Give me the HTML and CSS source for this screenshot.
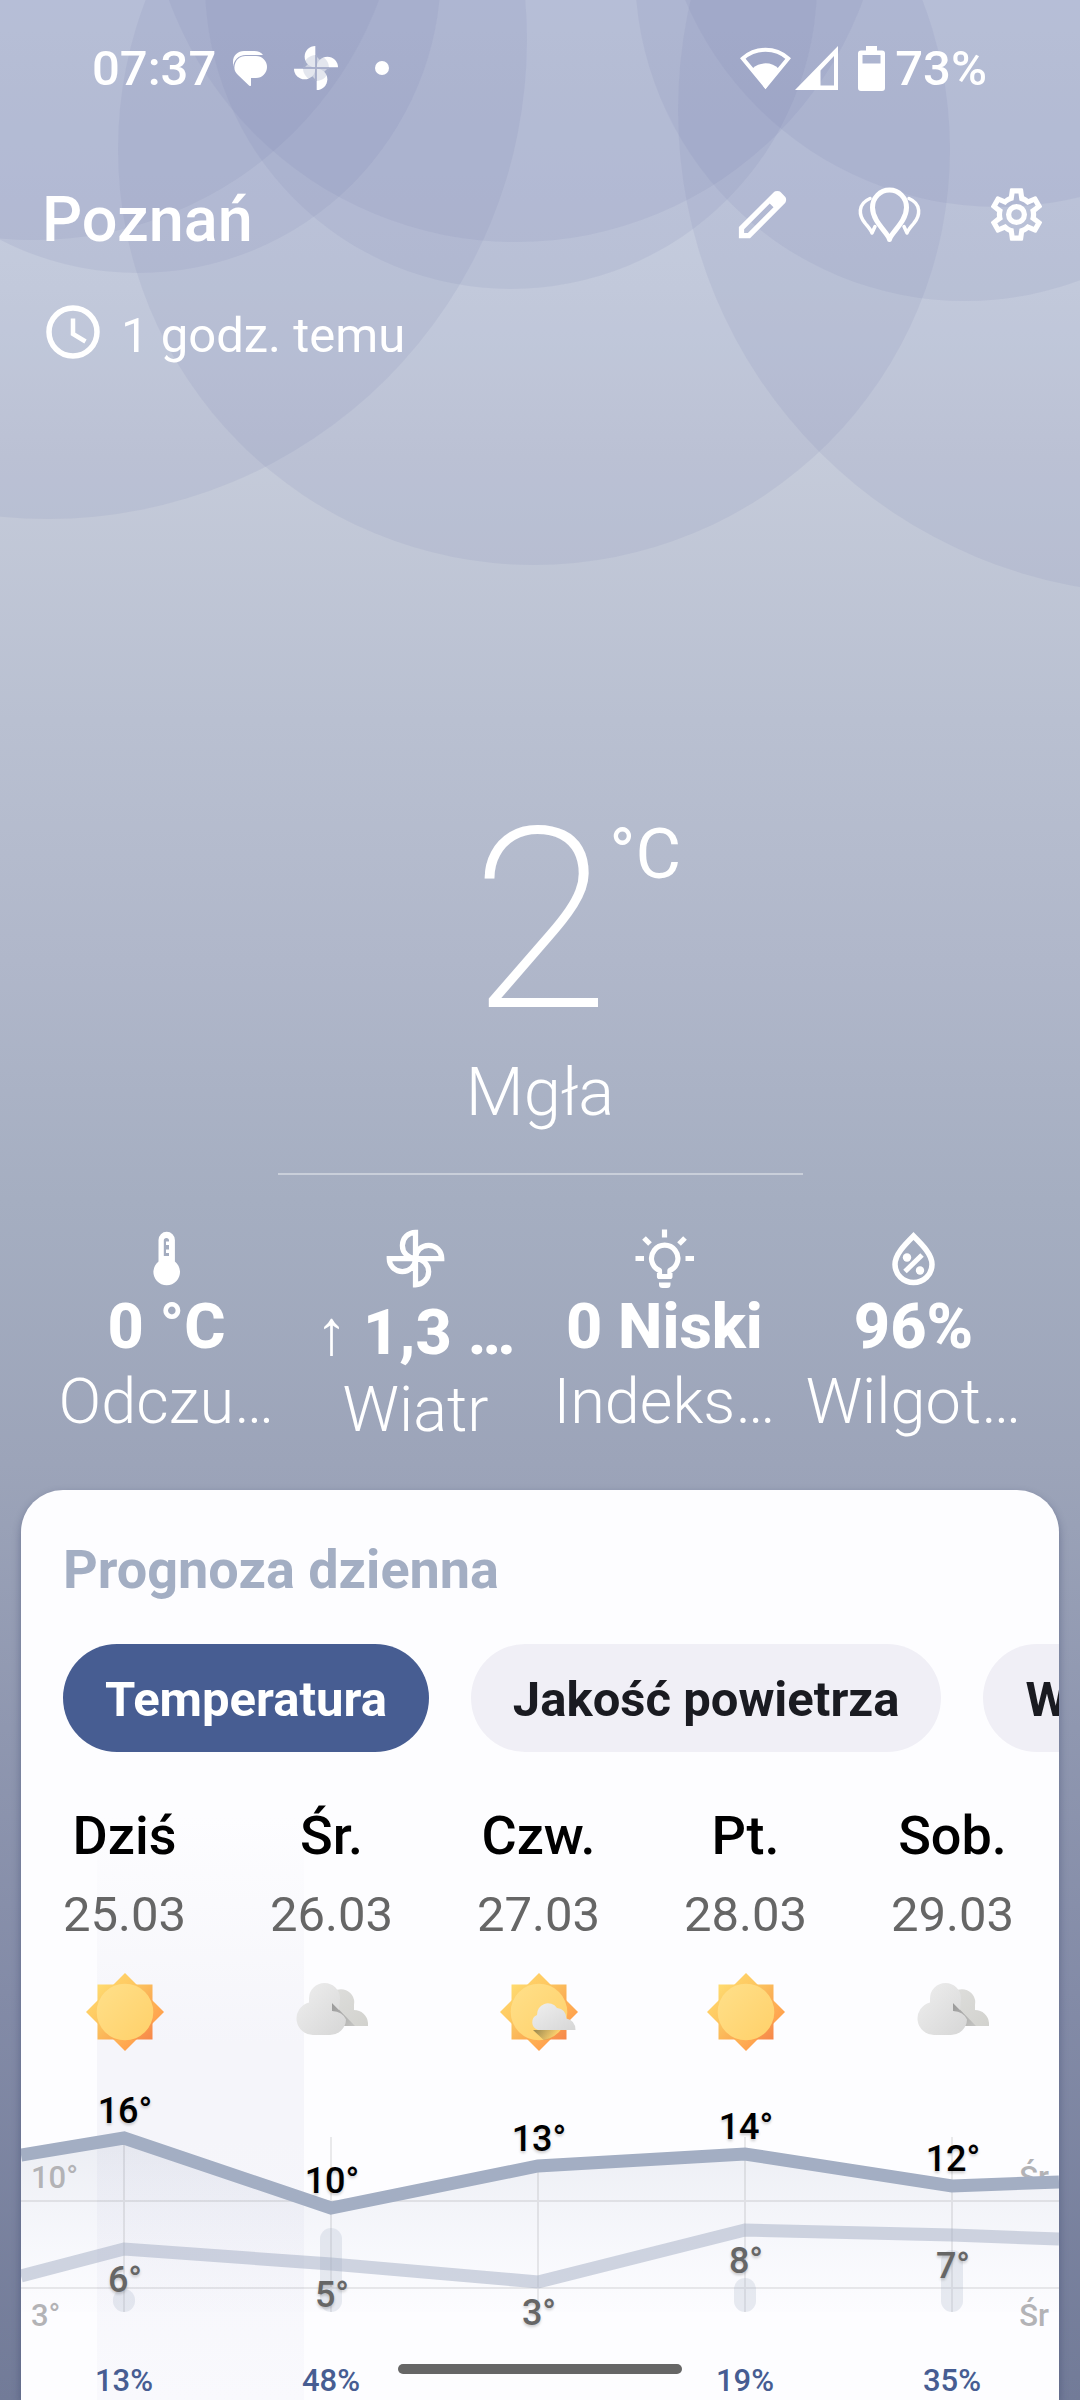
FILE: index.html
```html
<!DOCTYPE html>
<html lang="pl">
<head>
<meta charset="utf-8">
<meta name="viewport" content="width=device-width, initial-scale=1">
<title>Pogoda – Poznań</title>
<link rel="stylesheet" href="styles.css">
</head>
<body>
<div class="app">
  <svg class="sky" viewBox="0 0 1080 600" preserveAspectRatio="xMidYMin slice" aria-hidden="true">
    <circle cx="48" cy="40" r="479"/><circle cx="138" cy="-30" r="303"/><circle cx="34" cy="-128" r="368"/>
    <circle cx="534" cy="149" r="416"/><circle cx="511" cy="-17" r="306"/><circle cx="516" cy="-128" r="370"/>
    <circle cx="1162" cy="110" r="484"/><circle cx="965" cy="-29" r="330"/><circle cx="998" cy="-133" r="340"/>
  </svg>

  <div class="status">
    <div class="status-left">
      <time>07:37</time>
      <svg class="i-msg" viewBox="0 0 36 36" aria-hidden="true">
        <path d="M1 17V12C1 5 6 1 12 1h9c5 0 8 1 10 4H14C6 5 2 10 1 17Z"/>
        <path d="M14 6h10a11 11 0 0 1 0 22h-5v7q0 2-2 .5L6 25A11 11 0 0 1 14 6Z"/>
      </svg>
      <svg class="i-pin" viewBox="0 0 44 44" aria-hidden="true">
        <g opacity=".65"><path d="M21 11v10h-10Z M33 21H23V11Z M23 33V23h10Z M11 23h10v10Z"/></g>
        <path d="M21.3 0v21.3a10.6 10.6 0 0 1 0-21.3Z"/>
        <path transform="rotate(90 22 22)" d="M21.3 0v21.3a10.6 10.6 0 0 1 0-21.3Z"/>
        <path transform="rotate(180 22 22)" d="M21.3 0v21.3a10.6 10.6 0 0 1 0-21.3Z"/>
        <path transform="rotate(270 22 22)" d="M21.3 0v21.3a10.6 10.6 0 0 1 0-21.3Z"/>
        <circle cx="22" cy="22" r="13" fill="#a9b0cb" opacity=".32"/>
        <path d="M22 9v26M9 22h26" stroke="#a9b0cb" stroke-width="1.4"/>
      </svg>
      <span class="dot"></span>
    </div>
    <div class="status-right">
      <svg class="i-wifi" viewBox="0 0 51 44" aria-hidden="true">
        <path d="M2.8 12.5a34 34 0 0 1 45.4 0L25.500 40Z" fill="none" stroke="#fff" stroke-width="4"/>
        <path d="M12 23a19 19 0 0 1 27 0L25.500 43Z"/>
      </svg>
      <svg class="i-signal" viewBox="0 0 43 44" aria-hidden="true">
        <path fill-rule="evenodd" d="M0 44 43 0v44ZM25.500 39.500h13.500V10L25.500 24.500Z"/>
      </svg>
      <svg class="i-bat" viewBox="0 0 27 45" aria-hidden="true">
        <path fill-rule="evenodd" d="M8 0h11v4.500h5a3 3 0 0 1 3 3V42a3 3 0 0 1-3 3H3a3 3 0 0 1-3-3V7.500a3 3 0 0 1 3-3h5ZM4.500 9v8.500h18V9Z"/>
      </svg>
      <span>73%</span>
    </div>
  </div>

  <header class="top">
    <h1>Poznań</h1>
    <button type="button" class="tool" aria-label="Edytuj">
      <svg viewBox="0 0 24 24"><path d="M5 19h1.425L16.200 9.225 14.775 7.800 5 17.575Zm-2 2v-4.250L16.200 3.575q.3-.275.663-.425T17.625 3t.775.150.650.450L20.425 5q.3.275.438.650T21 6.400q0 .4-.138.763t-.437.662L7.250 21Z"/></svg>
    </button>
    <button type="button" class="tool" aria-label="Lokalizacje">
      <svg viewBox="0 0 63 63" fill="none" stroke="#fff" stroke-linecap="round" stroke-linejoin="round">
        <path stroke-width="5" d="M31.500 56.500C30.500 50 14.500 39 14.500 24.500a17 17.500 0 0 1 34 0C48.500 39 32.500 50 31.500 56.500Z"/>
        <path stroke-width="3.500" d="M12 15.500C-1 21 1 33 7 40c4 5 6 7 7 10l3-6.500M51 15.500C64 21 62 33 56 40c-4 5-6 7-7 10l-3-6.500"/>
      </svg>
    </button>
    <button type="button" class="tool" aria-label="Ustawienia">
      <svg viewBox="0 0 24 24"><path d="M12 8a4 4 0 0 1 4 4 4 4 0 0 1-4 4 4 4 0 0 1-4-4 4 4 0 0 1 4-4m0 2a2 2 0 0 0-2 2 2 2 0 0 0 2 2 2 2 0 0 0 2-2 2 2 0 0 0-2-2m-2 12c-.250 0-.460-.180-.500-.420l-.370-2.650c-.630-.250-1.170-.590-1.690-.990l-2.490 1.010c-.220.080-.490 0-.610-.220l-2-3.460c-.130-.220-.070-.490.120-.640l2.110-1.660L4.500 12l.070-1-2.110-1.630c-.190-.150-.250-.420-.120-.640l2-3.460c.120-.220.390-.310.610-.220l2.490 1c.520-.390 1.060-.730 1.690-.980l.370-2.650c.040-.240.250-.420.500-.420h4c.250 0 .460.180.500.420l.370 2.650c.630.250 1.170.590 1.690.980l2.490-1c.220-.090.490 0 .610.220l2 3.460c.130.220.070.490-.120.640L19.430 11l.070 1-.070 1 2.110 1.630c.190.150.250.420.120.640l-2 3.460c-.120.220-.390.310-.610.220l-2.490-1c-.520.390-1.060.730-1.690.980l-.370 2.650c-.040.240-.250.420-.500.420zm1.250-18-.370 2.610c-1.200.250-2.260.890-3.030 1.780L5.440 7.350l-.750 1.300L6.800 10.200a5.550 5.550 0 0 0 0 3.600l-2.120 1.560.750 1.300 2.430-1.040c.770.880 1.820 1.520 3.010 1.760l.370 2.620h1.520l.370-2.610c1.190-.250 2.240-.890 3.010-1.770l2.430 1.040.750-1.300-2.120-1.550c.400-1.170.400-2.440 0-3.610l2.110-1.550-.750-1.300-2.410 1.040a5.420 5.420 0 0 0-3.030-1.770L12.750 4z"/></svg>
    </button>
  </header>

  <p class="updated">
    <svg viewBox="0 0 54 54" fill="none" stroke="#fff" aria-hidden="true"><circle cx="27" cy="27" r="24" stroke-width="5.500"/><path stroke-width="4.500" d="M27 13.500V29l12.500 7.500"/></svg>
    <span>1 godz. temu</span>
  </p>

  <main>
    <section class="now">
      <div class="temp"><span class="deg">2</span><span class="unit">°C</span></div>
      <p class="cond">Mgła</p>
      <hr>
      <ul class="stats">
        <li>
          <svg viewBox="0 0 63 63" aria-hidden="true"><path fill-rule="evenodd" d="M23.500 13a8.200 8.200 0 0 1 16.400 0v21.500a13.300 13.300 0 1 1-16.400 0ZM28.800 13.500V29H34v-3h-3v-3.500h3V18h-3v-3.500h3v-1a2.600 2.600 0 0 0-5.200 0Z"/></svg>
          <strong>0 °C</strong><span>Odczu…</span>
        </li>
        <li>
          <svg viewBox="0 0 24 24" fill="none" stroke="#fff" stroke-width="2" aria-hidden="true"><path d="M12 13V2a5 5 0 0 0 0 10M11 12h11a5 5 0 0 0-10 0M12 11v11a5 5 0 0 0 0-10M13 12H2a5 5 0 0 0 10 0"/></svg>
          <strong class="with-arrow">↑ 1,3 …</strong><span>Wiatr</span>
        </li>
        <li>
          <svg viewBox="0 0 63 63" aria-hidden="true"><g fill="none" stroke="#fff" stroke-width="5.200"><path d="M26.500 49.500V43.500a13.200 13.200 0 1 1 10.400 0V49.500Z" stroke-linejoin="round"/><path d="M31.500 2.500v8M2.500 31.500h8.500M52.500 31.500H61M11 11l6 6M52 11l-6 6"/></g><path d="M26 55.500h11.500v2a3.500 3.500 0 0 1-3.500 3.500h-4.500a3.500 3.500 0 0 1-3.500-3.500Z"/></svg>
          <strong>0 Niski</strong><span>Indeks…</span>
        </li>
        <li>
          <svg viewBox="0 0 63 63" aria-hidden="true"><path fill="none" stroke="#fff" stroke-width="5.500" d="M31.500 9C22 18.500 13 27.500 13 37.500a18.500 18 0 0 0 37 0C50 27.500 41 18.500 31.500 9Z"/><path d="M23 44.500 40 28" stroke="#fff" stroke-width="5"/><circle cx="25" cy="30.500" r="4.200"/><circle cx="38" cy="43.500" r="4.200"/></svg>
          <strong>96%</strong><span>Wilgot…</span>
        </li>
      </ul>
    </section>

    <section class="card">
      <h2>Prognoza dzienna</h2>
      <div class="chips">
        <button type="button" class="chip active" aria-pressed="true">Temperatura</button>
        <button type="button" class="chip" aria-pressed="false">Jakość powietrza</button>
        <button type="button" class="chip" aria-pressed="false">Wiatr</button>
      </div>

      <svg class="defs" width="0" height="0" aria-hidden="true">
        <defs>
          <linearGradient id="ray" x1="0" y1="0" x2="1" y2="1"><stop offset="0" stop-color="#ffdc70"/><stop offset=".45" stop-color="#fbbd5c"/><stop offset=".75" stop-color="#fba04e"/><stop offset="1" stop-color="#f6874b"/></linearGradient>
          <linearGradient id="ray2" gradientUnits="userSpaceOnUse" x1="22" y1="22" x2="62" y2="62"><stop offset="0" stop-color="#ffd067"/><stop offset=".5" stop-color="#fdc05c"/><stop offset="1" stop-color="#ffa24e"/></linearGradient>
          <linearGradient id="disc" x1="0" y1="0" x2="1" y2="1"><stop offset="0" stop-color="#ffe08a"/><stop offset="1" stop-color="#ffd069"/></linearGradient>
          <linearGradient id="front" x1="0" y1="0" x2="1" y2="1"><stop offset="0" stop-color="#efefef"/><stop offset="1" stop-color="#d6d6d6"/></linearGradient>
          <linearGradient id="back" x1="0" y1="0" x2="1" y2="1"><stop offset="0" stop-color="#dededc"/><stop offset="1" stop-color="#d2d2ce"/></linearGradient>
          <linearGradient id="shade" gradientUnits="userSpaceOnUse" x1="42" y1="33" x2="64" y2="56"><stop offset="0" stop-color="#999"/><stop offset="1" stop-color="#c4c4c2"/></linearGradient>
          <linearGradient id="cast" gradientUnits="userSpaceOnUse" x1="40" y1="58" x2="56" y2="70"><stop offset="0" stop-color="#a08c50"/><stop offset="1" stop-color="#a08c50" stop-opacity="0"/></linearGradient>
          <linearGradient id="area" x1="0" y1="0" x2="0" y2="1"><stop offset="0" stop-color="#a3aec3" stop-opacity=".2"/><stop offset="1" stop-color="#c3c9e6" stop-opacity=".02"/></linearGradient>
          <symbol id="sun" viewBox="0 0 84 84">
            <path fill="url(#ray2)" d="M42 3 81 42 42 81 3 42Z"/><path fill="url(#ray)" d="M14.500 14.500h55v55h-55Z"/>
            <circle cx="42" cy="42" r="28.300" fill="url(#disc)"/>
          </symbol>
          <symbol id="cloud" viewBox="0 0 84 84">
            <path fill="url(#back)" d="M38 30a13 13 0 0 1 26 5v5a14 14 0 0 1 14 13v3H40Z"/>
            <path fill="url(#shade)" d="M42 32.500 65 56H52L42 41Z"/>
            <path fill="url(#front)" d="M19 32.500V28.500a15.500 15.500 0 0 1 31 0L49 40 42 33v8a16.500 12 0 0 1 14 8.500A16 16 0 0 1 40 65H23.500A16.500 16.500 0 0 1 19 32.500Z"/>
          </symbol>
          <symbol id="suncloud" viewBox="0 0 84 84">
            <use href="#sun" width="84" height="84"/>
            <path fill="url(#cast)" d="M36 60h27Q57 69 47 70.300Z"/>
            <path fill="url(#front)" d="M41 60a8 8 0 0 1-1-15 11 11 0 0 1 20-7q9 1 9.500 10.500 9 2 9 11.500Z"/>
          </symbol>
        </defs>
      </svg>

      <div class="forecast">
        <ol class="days">
          <li><b>Dziś</b><time>25.03</time><svg><use href="#sun"/></svg></li>
          <li><b>Śr.</b><time>26.03</time><svg><use href="#cloud"/></svg></li>
          <li><b>Czw.</b><time>27.03</time><svg><use href="#suncloud"/></svg></li>
          <li><b>Pt.</b><time>28.03</time><svg><use href="#sun"/></svg></li>
          <li><b>Sob.</b><time>29.03</time><svg><use href="#cloud"/></svg></li>
        </ol>
        <svg class="chart" viewBox="0 0 1038 320" role="img" aria-label="Temperatura dzienna i nocna">
          <path fill="url(#area)" d="M0 75 103 58 310 128 517 86 724 74 931 106 1038 102V232H0Z"/>
          <path class="grid" d="M0 121H1038M0 208H1038M103 58V232M310 57V232M517 86V232M724 57V232M931 57V232"/>
          <g class="rain">
            <rect x="92" y="209" width="22" height="23" rx="11"/><rect x="299" y="148" width="22" height="84" rx="11"/>
            <rect x="713" y="198" width="22" height="34" rx="11"/><rect x="920" y="170" width="22" height="62" rx="11"/>
          </g>
          <g class="axis"><text x="10" y="108">10°</text><text x="10" y="246">3°</text><text class="end" x="1028" y="108">Śr</text><text class="end" x="1028" y="246">Śr</text></g>
          <path class="low" d="M0 196 103 169 310 184 517 202 724 150 931 155 1038 159"/>
          <path class="high" d="M0 75 103 58 310 128 517 86 724 74 931 106 1038 102"/>
          <g class="max"><text x="104" y="43">16°</text><text x="311" y="113">10°</text><text x="518" y="71">13°</text><text x="725" y="59">14°</text><text x="932" y="91">12°</text></g>
          <g class="min"><text x="104" y="212">6°</text><text x="311" y="227">5°</text><text x="518" y="245">3°</text><text x="725" y="193">8°</text><text x="932" y="198">7°</text></g>
          <g class="chance"><text x="103" y="311">13%</text><text x="310" y="311">48%</text><text x="724" y="311">19%</text><text x="931" y="311">35%</text></g>
        </svg>
      </div>
    </section>
  </main>
  <div class="handle"></div>
</div>
</body>
</html>
```
FILE: styles.css
```css
* { box-sizing: border-box; margin: 0; padding: 0; }
body { font-family: Roboto, "Noto Sans", sans-serif; color: #fff; }
ul, ol { list-style: none; }
button { border: 0; background: none; font: inherit; color: inherit; }
svg { display: block; fill: #fff; flex: none; }
svg[fill="none"] { fill: none; }

.app {
  position: relative;
  min-height: 100vh;
  display: flex;
  flex-direction: column;
  overflow: hidden;
  background: linear-gradient(#d6deec 0%, #cdd4e2 12%, #c5cbda 19%, #b9c0d1 30%, #b0b7ca 40%, #a5aec1 50%, #9ca4b9 61%, #8f97b0 72%, #838ba7 83%, #727b98 100%);
}
.sky { position: absolute; top: 0; left: 0; width: 100%; height: 600px; fill: #7c86b0; fill-opacity: .13; }
.status, .top, .updated, main { position: relative; }

.status {
  height: 136px;
  padding: 0 93px 0 92px;
  display: flex;
  align-items: center;
  justify-content: space-between;
  font-size: 49px;
  font-weight: 500;
}
.status-left, .status-right { display: flex; align-items: center; }
.i-msg { width: 36px; height: 36px; margin-left: 16px; }
.i-pin { width: 44px; height: 44px; margin-left: 26px; }
.dot { width: 14px; height: 14px; margin-left: 37px; border-radius: 50%; background: #fff; }
.i-wifi { width: 51px; height: 44px; }
.i-signal { width: 43px; height: 44px; margin-left: 4px; }
.i-bat { width: 27px; height: 45px; margin: 0 10px 0 20px; }

.top { height: 156px; padding-left: 42px; display: flex; align-items: center; }
.top h1 { flex: 1; padding-top: 10px; font-size: 63px; font-weight: 500; }
.tool { width: 127px; height: 126px; display: grid; place-items: center; }
.tool svg { width: 63px; height: 63px; }

.updated { height: 80px; padding-left: 46px; display: flex; align-items: center; gap: 21px; font-size: 49px; }
.updated svg { width: 54px; height: 54px; }
.updated span { padding-top: 6px; }

.now { padding-top: 420px; text-align: center; }
.temp { display: grid; grid-template-columns: 1fr auto 1fr; }
.deg { grid-column: 2; padding-top: 2px; font-size: 252px; line-height: 254px; font-weight: 200; }
.unit { padding-top: 26px; font-size: 70px; line-height: 72px; font-weight: 400; text-align: left; }
.cond { margin-top: 4px; font-size: 67px; line-height: 80px; font-weight: 300; }
.now hr { width: 525px; max-width: 80%; height: 2px; margin: 41px auto 52px; border: 0; background: rgba(255, 255, 255, .4); }

.stats { min-height: 219px; padding: 0 42px; display: grid; grid-template-columns: repeat(4, 1fr); }
.stats li { display: flex; flex-direction: column; align-items: center; white-space: nowrap; font-size: 63px; line-height: 72px; }
.stats svg { width: 63px; height: 63px; }
.stats strong { font-weight: 800; margin: 1px 0 3px; }
.stats .with-arrow { padding: 6px 0 2px; }
.stats span { font-weight: 300; }

.card {
  margin: 44px 21px 0;
  padding-top: 48px;
  border-radius: 42px 42px 0 0;
  overflow: hidden;
  background: #fdfdff;
  color: #000;
  box-shadow: 0 4px 8px rgba(40, 50, 90, .4);
}
.card h2 { padding-left: 42px; font-size: 54px; line-height: 64px; font-weight: 700; color: #a3aec3; }
.chips { margin-top: 42px; padding-left: 42px; display: flex; gap: 42px; overflow: hidden; }
.chip {
  flex: none;
  height: 108px;
  padding: 2px 42px 0;
  border-radius: 54px;
  background: #f0eff6;
  color: #1a1b21;
  font-size: 49px;
  font-weight: 700;
}
.chip.active { background: #475d92; color: #fff; }
.defs { position: absolute; }

.forecast {
  padding-top: 54px;
  background: linear-gradient(#fdfdff 10%, #f5f5fa 45%, #f5f5fa 60%, #f9f9fd 100%) 76px 0 / 207px 100% no-repeat;
}
.days { margin-right: 3px; display: grid; grid-template-columns: repeat(5, 1fr); }
.days li { display: flex; flex-direction: column; align-items: center; }
.days b { font-size: 54px; line-height: 60px; font-weight: 500; }
.days time { margin: 21px 0 27px; font-size: 49px; line-height: 56px; color: #666; }
.days svg { width: 84px; height: 84px; }

.chart { width: 100%; height: auto; margin-top: 26px; font-weight: 500; }
.grid { fill: none; stroke: #000; stroke-opacity: .08; stroke-width: 2; }
.rain { fill: #a3aec3; fill-opacity: .24; }
.high, .low { fill: none; stroke: #a3aec3; stroke-width: 13; }
.low { stroke-opacity: .5; }
.axis { font-size: 31px; fill: #b3b3b6; }
.axis .end { text-anchor: end; }
.max, .min { font-size: 36px; text-anchor: middle; text-shadow: 0 2px 3px rgba(0, 0, 0, .2); }
.max { fill: #000; }
.min { fill: #666; }
.chance { font-size: 31px; text-anchor: middle; fill: #475d92; }

.handle {
  position: fixed;
  left: 50%;
  bottom: 26px;
  width: 284px;
  height: 10px;
  margin-left: -142px;
  border-radius: 5px;
  background: #666;
}
```
